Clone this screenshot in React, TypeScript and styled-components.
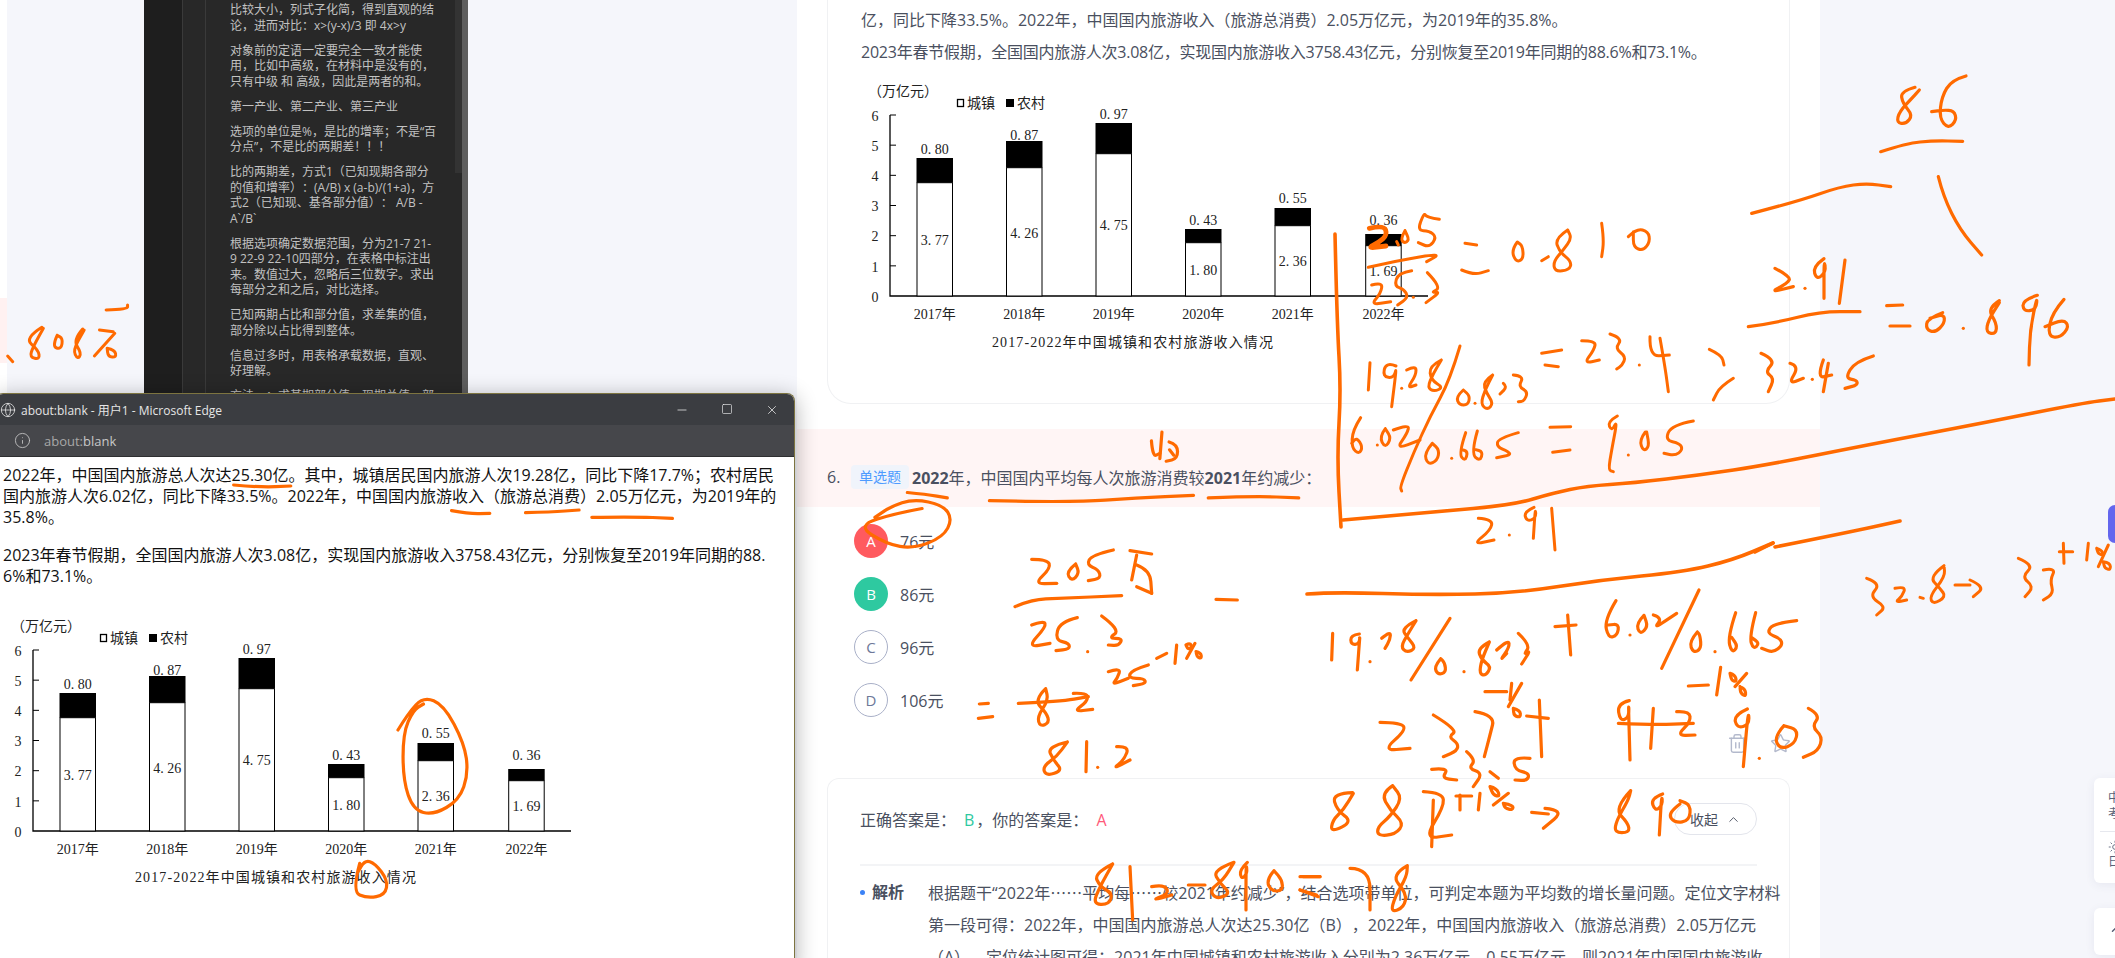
import React from "react";
import styled, { createGlobalStyle } from "styled-components";
import { ChevronUp, Globe, Info, Minus, Square, Star, Sun, Trash2, X } from "lucide-react";

const GlobalStyle = createGlobalStyle`
  html, body { margin: 0; padding: 0; background: #f5f6fb; }
  body {
    width: 2115px;
    height: 958px;
    overflow: hidden;
    font-family: "Open Sans", "Noto Sans CJK SC", sans-serif;
    text-spacing-trim: space-all;
  }
  * { box-sizing: border-box; }
`;

const Page = styled.div`
  position: relative;
  display: flex;
  width: 2115px;
  height: 958px;
  overflow: hidden;
  background: #f5f6fb;
`;

const LeftColumn = styled.div`
  display: flex;
  flex: 0 0 797px;
  align-items: flex-start;
`;

const EdgeStrip = styled.div`
  flex: 0 0 7px;
  height: 393px;
  padding-top: 298px;
  margin-right: 137px;
  background: #fff;
`;

const EdgePink = styled.div`
  height: 65px;
  background: #fff1f1;
`;

const Notes = styled.aside`
  position: relative;
  display: flex;
  flex: 0 0 324px;
  height: 393px;
  overflow: hidden;
  background: #282828;
`;

const NotesRail = styled.div`
  flex: 0 0 39px;
  background: #1e1e1e;
  border-right: 1px solid #3a3a3a;
`;

const NotesGutter = styled.div`
  flex: 0 0 23px;
  border-right: 1px solid #3a3a3a;
`;

const NotesBody = styled.div`
  flex: 1;
  min-width: 0;
  padding: 2px 0 0 24px;
`;

const NoteLine = styled.p`
  margin: 0 0 9.5px;
  font-size: 12px;
  line-height: 15.5px;
  color: #c2c2c2;
  white-space: nowrap;
`;

const NotesTrack = styled.div`
  flex: 0 0 6px;
  background: #5e5e5e;
`;

const NotesThumb = styled.div`
  position: absolute;
  top: 0;
  right: 6px;
  width: 7px;
  height: 173px;
  background: #333;
`;

const Panel = styled.main`
  display: flex;
  flex-direction: column;
  flex: 0 0 1023px;
  min-width: 0;
  height: 958px;
  overflow: hidden;
  background: #fff;
  color: #4a5060;
`;

const ChartCard = styled.section`
  flex: none;
  margin: 0 30px;
  height: 404px;
  padding: 4px 33px 0;
  border: 1px solid #f0f1f3;
  border-top: 0;
  border-radius: 0 0 24px 24px;
`;

const PanelText = styled.p<{ $track: number }>`
  margin: 0;
  font-size: 16px;
  line-height: 32px;
  white-space: nowrap;
  letter-spacing: ${(p) => p.$track}px;
`;

const QuestionBand = styled.div`
  display: flex;
  flex: none;
  align-items: center;
  height: 78px;
  margin-top: 25px;
  padding: 36px 0 18px 30px;
  background: #fff5f5;
  font-size: 16px;
`;

const QuestionNo = styled.span`
  flex: 0 0 24px;
`;

const KindTag = styled.span`
  flex: 0 0 58px;
  height: 24px;
  margin-right: 3px;
  border-radius: 4px;
  background: #f0f4fb;
  color: #4d9bff;
  font-size: 14px;
  line-height: 24px;
  text-align: center;
`;

const Strong = styled.b`
  font-weight: 700;
`;

const Options = styled.ul`
  display: flex;
  flex: none;
  flex-direction: column;
  gap: 19px;
  margin: 17px 0 0;
  padding: 0 0 0 57px;
  list-style: none;
`;

const Option = styled.li`
  display: flex;
  align-items: center;
  gap: 12px;
  height: 34px;
  font-size: 16px;
`;

const Bubble = styled.span<{ $state: "wrong" | "right" | "idle" }>`
  display: flex;
  flex: 0 0 34px;
  align-items: center;
  justify-content: center;
  height: 34px;
  border-radius: 50%;
  font-size: 15px;
  background: ${(p) => (p.$state === "wrong" ? "#ff5a5f" : p.$state === "right" ? "#2ec9a0" : "#fff")};
  color: ${(p) => (p.$state === "idle" ? "#6d7899" : "#fff")};
  border: ${(p) => (p.$state === "idle" ? "1px solid #a9b0c8" : "0")};
`;

const Actions = styled.div`
  display: flex;
  flex: none;
  justify-content: flex-end;
  gap: 22px;
  height: 20px;
  margin-top: 16px;
  padding-right: 29px;
  color: #b3b9cc;
`;

const AnswerCard = styled.section`
  flex: 1 0 auto;
  margin: 25px 30px 0;
  padding: 0 32px;
  min-width: 0;
  border: 1px solid #f0f1f3;
  border-bottom: 0;
  border-radius: 12px 12px 0 0;
`;

const AnswerHead = styled.div`
  display: flex;
  align-items: center;
  justify-content: space-between;
  padding: 24px 0 29px;
  border-bottom: 2px solid #f3f4f6;
  font-size: 16px;
`;

const Mark = styled.span<{ $color: string }>`
  margin: 0 2px 0 8px;
  color: ${(p) => p.$color};
`;

const CollapseButton = styled.button`
  display: flex;
  align-items: center;
  justify-content: center;
  gap: 8px;
  width: 83px;
  height: 32px;
  padding: 0;
  border: 1px solid #e3e5ec;
  border-radius: 16px;
  background: #fff;
  color: #4a5060;
  font: inherit;
  font-size: 14px;
`;

const Analysis = styled.div`
  display: flex;
  padding-top: 10px;
  font-size: 16px;
  line-height: 32px;
`;

const AnalysisDot = styled.span`
  flex: 0 0 5px;
  height: 5px;
  margin: 14px 7px 0 0;
  border-radius: 50%;
  background: #3b82f6;
`;

const AnalysisLabel = styled.b`
  flex: 0 0 56px;
  font-weight: 700;
`;

const AnalysisText = styled.p`
  margin: 0;
  white-space: nowrap;
`;

const Dots = styled.span`
  font-family: "Noto Sans CJK SC", sans-serif;
`;

const Rail = styled.div`
  display: flex;
  flex-direction: column;
  flex: 1;
  padding-left: 274px;
  padding-top: 778px;
  gap: 25px;
  font-size: 12px;
  color: #5a6178;
`;

const RailCard = styled.div<{ $h: number }>`
  display: flex;
  flex-direction: column;
  flex: none;
  height: ${(p) => p.$h}px;
  padding: 12px 0 0 14px;
  border-radius: 6px 0 0 6px;
  background: #fff;
  box-shadow: 0 2px 10px rgba(60, 70, 110, 0.08);
  white-space: nowrap;
  overflow: hidden;
`;

const RailRule = styled.div`
  flex: none;
  height: 1px;
  margin: 9px 0 8px -8px;
  background: #e6e8ee;
`;

const RailLabel = styled.span`
  line-height: 16px;
`;

const SidePill = styled.div`
  position: absolute;
  top: 505px;
  right: 0;
  width: 7px;
  height: 38px;
  border-radius: 8px 0 0 8px;
  background: #6366ee;
`;

const EdgeWindow = styled.section`
  position: absolute;
  top: 393px;
  left: -5px;
  width: 800px;
  height: 580px;
  border: 1px solid #7d7440;
  border-bottom: 0;
  border-radius: 8px 8px 0 0;
  background: #fff;
  box-shadow: 0 4px 22px rgba(0, 0, 0, 0.32);
`;

const TitleBar = styled.header`
  display: flex;
  align-items: center;
  height: 31px;
  padding-left: 4px;
  border-radius: 7px 7px 0 0;
  background: #3b3d41;
  color: #e6e6e6;
  font-size: 12px;
`;

const TitleText = styled.span`
  flex: 1;
  margin-left: 5px;
`;

const WinButtons = styled.div`
  display: flex;
  gap: 32px;
  margin-right: 15px;
  color: #eee;
`;

const AddressBar = styled.div`
  display: flex;
  align-items: center;
  gap: 13px;
  height: 32px;
  padding-left: 18px;
  border-bottom: 1px solid #2e2f31;
  background: #46474b;
  color: #c8c8c8;
  font-size: 13px;
`;

const Dim = styled.span`
  color: #a8a8a8;
`;

const WinContent = styled.div`
  padding: 8px 0 0 7px;
  color: #111;
`;

const WinText = styled.p`
  margin: 0 0 17px;
  font-size: 16px;
  line-height: 21px;
  white-space: nowrap;
`;

const WinChart = styled.div`
  margin: -4px 0 0 -3px;
`;

const ChartSvg = styled.svg`
  display: block;
  overflow: visible;
  text {
    font-family: "Liberation Serif", "Noto Sans CJK SC", serif;
    font-size: 14px;
    fill: #222;
    dominant-baseline: central;
  }
  text.center { text-anchor: middle; }
  text.title { text-anchor: middle; letter-spacing: 1.1px; }
`;

const ChartInMain = styled.div`
  margin: -3px 0 0 -4px;
`;

const InkLayer = styled.svg`
  position: absolute;
  inset: 0;
  width: 2115px;
  height: 958px;
  pointer-events: none;
  path {
    fill: none;
    stroke: #ff6a00;
    stroke-linecap: round;
    stroke-linejoin: round;
    vector-effect: non-scaling-stroke;
  }
`;

const bars = [
  { x: 60, top: 93, mid: 117.7, lo: "3. 77", hi: "0. 80", loY: 175, hiY: 84, year: "2017年" },
  { x: 149.5, top: 76, mid: 102.7, lo: "4. 26", hi: "0. 87", loY: 168, hiY: 70, year: "2018年" },
  { x: 239, top: 58, mid: 88.7, lo: "4. 75", hi: "0. 97", loY: 160, hiY: 49, year: "2019年" },
  { x: 328.5, top: 164, mid: 177.7, lo: "1. 80", hi: "0. 43", loY: 205, hiY: 155, year: "2020年" },
  { x: 418, top: 143, mid: 160.7, lo: "2. 36", hi: "0. 55", loY: 196, hiY: 133, year: "2021年" },
  { x: 508.7, top: 169, mid: 180.7, lo: "1. 69", hi: "0. 36", loY: 206, hiY: 155, year: "2022年" },
];

function Chart() {
  const w = 35.5;
  return (
    <ChartSvg width={580} height={290} viewBox="0 0 580 290">
      <text x={11} y={26}>（万亿元）</text>
      <rect x={100.5} y={34.5} width={6} height={7} fill="#fff" stroke="#000" strokeWidth={1.3} />
      <text x={110} y={38}>城镇</text>
      <rect x={149} y={34} width={8} height={8} fill="#000" />
      <text x={160} y={38}>农村</text>
      {[6, 5, 4, 3, 2, 1, 0].map((n, i) => (
        <text key={n} className="center" x={18} y={51 + i * 30.2}>{n}</text>
      ))}
      <path d="M33 50V231H571" fill="none" stroke="#000" strokeWidth={1.3} />
      {[0, 1, 2, 3, 4, 5].map((i) => (
        <path key={i} d={`M33 ${50 + i * 30.17}h6`} stroke="#000" strokeWidth={1} />
      ))}
      {bars.map((b) => (
        <g key={b.year}>
          <rect x={b.x} y={b.mid} width={w} height={231 - b.mid} fill="#fff" stroke="#000" strokeWidth={1} />
          <rect x={b.x - 0.5} y={b.top} width={w + 1} height={b.mid - b.top} fill="#000" />
          <text className="center" x={b.x + w / 2} y={b.hiY}>{b.hi}</text>
          <text className="center" x={b.x + w / 2} y={b.loY}>{b.lo}</text>
          <text className="center" x={b.x + w / 2} y={249}>{b.year}</text>
        </g>
      ))}
      <text className="title" x={276} y={277}>2017-2022年中国城镇和农村旅游收入情况</text>
    </ChartSvg>
  );
}

const smooth = (s: string) => {
  const p = s.trim().split(/\s+/).map((q) => q.split(",").map(Number));
  if (p.length === 1) return `M${p[0][0]} ${p[0][1]}l0.01 0`;
  let d = `M${p[0][0]} ${p[0][1]}`;
  for (let i = 1; i < p.length - 1; i++) {
    const mx = (p[i][0] + p[i + 1][0]) / 2;
    const my = (p[i][1] + p[i + 1][1]) / 2;
    d += `Q${p[i][0]} ${p[i][1]} ${mx} ${my}`;
  }
  const l = p[p.length - 1];
  return d + `L${l[0]} ${l[1]}`;
};

type InkGroup = { ox: number; oy: number; sx: number; sy: number; w: number; strokes: string[] };

const ink: InkGroup[] = [
  { ox: 0, oy: 0, sx: 1, sy: 1, w: 3.6, strokes: [
    "1335,234 1337,323 1341,390 1337,457 1341,527",
    "1343,520 1433,512 1513,505 1553,493 1587,486 1633,483 1700,475 1767,465 1867,445 1983,423 2083,403 2115,399",
    "1307,594 1333,592 1433,595 1517,593 1600,580 1683,572 1733,560 1773,543",
    "1775,547 1850,532 1900,521",
    "1755,552 1773,543",
  ] },
  { ox: 1300, oy: 190, sx: 1/3, sy: 1/3, w: 4.8, strokes: [
    "208,115 252,105 262,135 235,158 202,175 258,168",
  ] },
  { ox: 1300, oy: 190, sx: 1/3, sy: 1/3, w: 3, strokes: [
    "290,155 295,165",
    "315,122 302,145 312,160 328,150 315,122",
    "418,88 380,82 372,68 352,122 388,122 410,142 388,172 355,158",
    "205,232 300,210 425,190 380,215",
    "215,285 248,276 242,310 212,345 272,335",
    "335,242 295,248 283,288 312,298 325,322 293,345",
    "340,322",
    "382,248 425,292 392,308 422,305 378,338",
    "495,160 530,165",
    "485,240 520,255 565,242",
    "652,156 634,180 648,216 670,208 668,168 652,156",
    "725,212 745,200",
    "803,120 765,145 778,185 815,215 808,240 765,245 760,215 790,180 815,145 803,120",
    "905,100 912,150 905,200",
    "985,140 1010,115 1045,125 1050,155 1030,182 1000,172 1000,125",
    "210,518 205,600",
    "288,528 258,516 248,560 282,564 290,528 275,650",
    "305,595",
    "320,540 348,526 348,555 322,594 348,585",
    "424,510 388,528 393,570 430,592 402,605 382,592 400,550 424,510",
    "480,468 450,570 390,680 340,790 300,890 305,903",
    "490,600 468,620 478,645 504,645 510,618 490,600",
    "525,640",
    "578,555 548,575 560,610 580,640 562,660 542,642 555,600 578,555",
    "610,580 622,590 600,612",
    "640,555 672,558 655,590 684,605 672,634 655,635",
    "725,490 785,480",
    "735,525 775,530",
    "845,452 888,452 882,480 852,520 898,510",
    "930,432 968,445 945,475 978,500 966,527 950,537",
    "1018,525",
    "1050,440 1048,500 1108,495",
    "1080,445 1095,530 1105,605",
    "1228,478 1265,495 1272,525",
    "1300,565 1260,590 1240,630",
    "182,683 158,720 155,775 178,792 188,770 170,742 155,760",
    "232,765",
    "256,716 238,740 255,774 274,745 256,716",
    "280,720 328,702 322,730 288,778 360,750",
    "397,760 372,790 384,824 412,812 418,780 397,760",
    "455,805",
    "497,728 476,790 495,814 504,785 484,778",
    "532,723 513,790 540,814 549,785 524,778",
    "655,728 595,745 590,770 625,785 632,795 590,803",
    "750,712 812,710",
    "758,787 810,780",
    "952,678 922,695 935,724 952,690 935,780 925,840 940,845",
    "985,795",
    "1036,726 1018,750 1030,784 1048,770 1040,726",
    "1180,693 1115,705 1095,750 1140,760 1148,780 1125,797 1092,790",
    "535,985 578,988 572,1020 518,1064 582,1050",
    "628,1035",
    "702,952 672,965 680,994 708,985 706,952 700,1045",
    "755,955 765,1080",
  ] },
  { ox: 1680, oy: 70, sx: 1/3, sy: 1/3, w: 3.2, strokes: [
    "705,52 662,64 668,100 698,135 678,162 650,158 658,125 700,80 718,60",
    "858,18 815,30 785,80 778,145 805,176 830,150 822,122 790,120 755,125",
    "602,245 680,220 760,212 848,214",
    "215,430 350,395 480,350 560,340 632,350",
    "775,320 790,380 840,480 905,555",
    "285,595 333,620 322,640 270,667 340,650",
    "375,655",
    "432,566 398,590 410,630 438,605 432,566 432,685",
    "495,570 478,700",
    "205,770 280,760 420,725 540,725",
    "620,707 668,705",
    "630,768 690,768",
    "788,728 742,745 738,778 765,788 794,760 792,732 750,745",
    "850,775",
    "958,692 922,715 950,760 948,792 918,788 925,750 958,698",
    "1072,676 1028,690 1030,724 1068,720 1072,676 1050,780 1047,885",
    "1152,688 1115,730 1103,798 1140,804 1168,770 1150,748 1095,770",
    "243,850 288,870 255,905 283,925 265,965",
    "330,880 358,888 325,942 370,925",
    "397,928",
    "430,870 410,925 455,915",
    "445,880 430,965",
    "580,858 525,875 495,925 530,930 533,945 495,955",
  ] },
  { ox: 960, oy: 530, sx: 1/3, sy: 1/3, w: 3.2, strokes: [
    "215,88 263,88 272,115 222,162 288,160",
    "290,160",
    "347,102 318,125 335,154 358,130 347,102",
    "460,60 395,75 380,105 415,118 423,145 385,152",
    "510,62 575,72",
    "530,75 515,150",
    "530,105 570,120 575,190",
    "530,170 575,190",
    "165,230 215,208 300,205 485,197",
    "768,208 832,210",
    "215,285 252,272 258,290 202,352 270,340",
    "352,263 300,275 285,330 328,340 328,357 288,362",
    "383,365",
    "425,258 482,300 445,325 488,325 476,347 445,345",
    "590,385 620,370",
    "650,345 645,400",
    "678,345 690,338 696,352 684,358 678,345",
    "705,340 680,385",
    "708,365 722,368 725,385 712,382 708,365",
    "445,425 483,413 472,445 456,464 505,445",
    "565,405 515,420 505,445 552,445 558,460 520,467",
    "58,522 85,520",
    "55,565 98,560",
    "257,476 222,510 260,550 268,578 240,590 232,560 265,510 257,476",
    "340,490 383,488 382,515 340,545 398,538",
    "175,520 300,515 385,500",
    "322,636 262,650 280,690 308,722 258,738 248,710 290,680 322,636",
    "380,635 378,725",
    "413,712",
    "470,650 508,648 492,690 458,717 510,690",
    "458,1002 402,1030 420,1070 458,1090 447,1124 398,1122 420,1070 458,1002",
    "510,1010 518,1170",
    "575,1070 612,1063 628,1090 573,1112 635,1095",
    "685,1065 735,1065",
    "822,997 758,1020 780,1060 812,1090 770,1108 748,1080 790,1050 822,997",
    "862,997 838,1020 845,1048 862,1030 858,997 858,1140",
    "942,1022 918,1050 935,1084 968,1082 966,1050 942,1022",
    "1030,1040 1080,1040",
    "1020,1080 1075,1100",
  ] },
  { ox: 1300, oy: 560, sx: 1/3, sy: 1/3, w: 3.2, strokes: [
    "98,220 95,300",
    "178,222 152,225 153,254 178,252 180,222 172,330",
    "210,305",
    "245,235 272,212 270,240 255,265",
    "348,182 303,205 325,235 348,265 320,278 302,260 325,220 348,182",
    "450,175 390,270 333,360",
    "422,296 402,320 414,344 438,337 434,308 422,296",
    "492,335",
    "568,246 532,265 545,300 574,320 556,348 538,340 545,300 568,246",
    "590,270 626,238 628,262 600,302 620,280",
    "655,220 692,255 670,285 692,270 665,312",
    "765,200 828,195",
    "803,165 812,285",
    "948,122 913,180 925,234 952,226 957,192 925,195",
    "990,225",
    "1032,166 1008,190 1020,224 1044,200 1032,166",
    "1060,165 1088,173 1060,207 1130,160",
    "1197,90 1140,210 1085,325",
    "1192,216 1167,245 1180,279 1204,266 1200,225 1192,216",
    "1245,275",
    "1307,158 1283,230 1295,279 1314,260 1295,232",
    "1367,158 1348,230 1360,268 1379,250 1354,232",
    "1490,182 1420,190 1400,220 1440,235 1448,255 1420,278 1385,265",
    "1165,378 1225,375",
    "1262,322 1250,405",
    "1290,340 1305,345 1310,365 1295,362 1290,340",
    "1340,340 1305,380",
    "1320,380 1335,385 1338,410 1322,400 1320,380",
    "240,487 303,488 318,510 248,572 330,565",
    "400,465 474,510 445,530 474,550 472,572 430,590",
    "525,455 585,465 570,525 553,590",
    "555,395 620,395",
    "635,370 630,420",
    "665,370 625,440",
    "640,445 660,450 662,472 642,468 640,445",
    "680,468 745,475",
    "718,420 725,590",
    "988,422 952,430 960,484 988,472 985,422 990,600",
    "1060,445 1052,565",
    "1130,455 1168,453 1172,485 1130,527 1185,525",
    "955,490 1060,495 1180,490",
    "1342,447 1302,465 1310,504 1348,495 1345,447 1330,620",
    "1378,595",
    "1452,497 1422,530 1440,568 1484,552 1494,510 1452,497",
    "1525,445 1562,465 1535,500 1568,530 1555,572 1510,592",
    "395,628 447,623 425,655 470,660",
    "500,575 528,600 505,625 548,640 520,680",
    "570,635 595,655",
    "690,595 640,590 645,630 688,640 682,662 645,660",
    "158,698 97,700 110,750 158,785 92,818 98,780 130,750 160,700",
    "278,677 243,700 270,750 312,790 287,823 233,828 233,800 270,770 307,715 278,677",
    "370,695 428,698 432,740 372,837 455,825",
    "400,720 395,860",
    "468,708 515,708",
    "480,705 480,750",
    "540,700 535,750",
    "570,680 590,685 600,710 580,705 570,680",
    "625,700 580,735",
    "610,730 640,735 638,750 615,745 610,730",
    "695,757 745,762",
    "735,745 795,750 730,805",
    "992,692 942,745 985,790 988,818 943,818 950,780 985,720 992,692",
    "1088,702 1052,715 1065,754 1088,735 1085,702 1078,825",
    "1140,732 1102,760 1125,789 1168,782 1172,735 1140,722",
    "150,925 210,925 210,1050",
    "322,917 272,945 320,1000 312,1042 272,1058 285,1010 320,950 322,917",
    "0,950 60,950",
    "0,990 50,1005",
  ] },
  { ox: 1750, oy: 380, sx: 1/3, sy: 1/3, w: 3, strokes: [
    "350,595 393,610 358,650 408,680 380,705",
    "435,625 468,618 456,650 435,667 470,660",
    "510,652 520,655",
    "582,557 537,590 570,625 588,650 550,673 538,650 585,590 582,557",
    "615,615 660,615",
    "660,600 705,620 670,650",
    "805,535 853,555 815,590 851,620 825,650",
    "880,570 918,563 900,600 911,640 880,660",
    "928,515 968,515",
    "940,490 942,550",
    "1015,490 1010,540",
    "1040,505 1055,510 1060,525 1045,522 1040,505",
    "1075,495 1045,560",
    "1060,545 1080,548 1082,570 1064,565 1060,545",
  ] },
  { ox: 800, oy: 400, sx: 1/2.376, sy: 1/2.81, w: 3.2, strokes: [
    "450,283 650,288 800,275 935,268",
    "970,275 1080,270 1185,275",
    "255,260 300,265 350,275",
    "290,305 230,318 135,352 205,405 270,418 340,385 362,335 340,295 270,278 215,300 178,330",
    "835,115 838,160 855,150",
    "860,90 855,165",
    "877,118 897,125 897,165 870,172",
    "878,140 888,155",
  ] },
  { ox: 0, oy: 480, sx: 1/1.96, sy: 1/3, w: 3.2, strokes: [
    "458,15 510,22 570,18",
    "885,92 920,102 960,100",
    "1030,98 1080,96 1135,90",
    "1160,112 1240,110 1318,115",
    "780,750 800,700 830,650 870,675 910,790 918,880 900,960 850,1005 810,990 790,900 790,760 810,690 830,672",
    "705,1150 690,1235 720,1255 755,1245 760,1200 735,1150 715,1140 700,1180",
  ] },
  { ox: 0, oy: 0, sx: 1/1.96, sy: 1/3, w: 3, strokes: [
    "208,930 250,928 250,915",
    "15,1068 25,1085",
    "82,982 48,1015 75,1050 78,1078 58,1072 65,1040 85,985",
    "112,1006 102,1040 120,1048 123,1015 112,1006",
    "162,987 143,1020 160,1060 152,1078 143,1050 165,990",
    "195,990 222,995",
    "225,1000 185,1068",
    "210,1045 225,1050 228,1072 212,1070 210,1045",
  ] },
];

const notes = [
  ["比较大小，列式子化简，得到直观的结", "论，进而对比：x>(y-x)/3 即 4x>y"],
  ["对象前的定语一定要完全一致才能使", "用，比如中高级，在材料中是没有的，", "只有中级 和 高级，因此是两者的和。"],
  ["第一产业、第二产业、第三产业"],
  ["选项的单位是%，是比的增率；不是“百", "分点”，不是比的两期差！！！"],
  ["比的两期差，方式1（已知现期各部分", "的值和增率）：(A/B) x (a-b)/(1+a)，方", "式2（已知现、基各部分值）： A/B -", "A`/B`"],
  ["根据选项确定数据范围，分为21-7 21-", "9 22-9 22-10四部分，在表格中标注出", "来。数值过大，忽略后三位数字。求出", "每部分之和之后，对比选择。"],
  ["已知两期占比和部分值，求差集的值，", "部分除以占比得到整体。"],
  ["信息过多时，用表格承载数据，直观、", "好理解。"],
  ["方法一：求基期部分值、现期总值、部"],
];

const lines = (arr: string[]) =>
  arr.map((t, i) => (
    <React.Fragment key={i}>
      {i > 0 && <br />}
      {t}
    </React.Fragment>
  ));

export default function App() {
  return (
    <Page>
      <GlobalStyle />
      <LeftColumn>
        <EdgeStrip>
          <EdgePink />
        </EdgeStrip>
        <Notes>
          <NotesRail />
          <NotesGutter />
          <NotesBody>
            {notes.map((n, i) => (
              <NoteLine key={i}>{lines(n)}</NoteLine>
            ))}
          </NotesBody>
          <NotesThumb />
          <NotesTrack />
        </Notes>
      </LeftColumn>

      <Panel>
        <ChartCard>
          <PanelText $track={0}>亿，同比下降33.5%。2022年，中国国内旅游收入（旅游总消费）2.05万亿元，为2019年的35.8%。</PanelText>
          <PanelText $track={-0.24}>2023年春节假期，全国国内旅游人次3.08亿，实现国内旅游收入3758.43亿元，分别恢复至2019年同期的88.6%和73.1%。</PanelText>
          <ChartInMain>
            <Chart />
          </ChartInMain>
        </ChartCard>

        <QuestionBand>
          <QuestionNo>6.</QuestionNo>
          <KindTag>单选题</KindTag>
          <span>
            <Strong>2022</Strong>年，中国国内平均每人次旅游消费较<Strong>2021</Strong>年约减少：
          </span>
        </QuestionBand>

        <Options>
          <Option><Bubble $state="wrong">A</Bubble>76元</Option>
          <Option><Bubble $state="right">B</Bubble>86元</Option>
          <Option><Bubble $state="idle">C</Bubble>96元</Option>
          <Option><Bubble $state="idle">D</Bubble>106元</Option>
        </Options>

        <Actions>
          <Trash2 size={21} strokeWidth={1.6} />
          <Star size={21} strokeWidth={1.6} />
        </Actions>

        <AnswerCard>
          <AnswerHead>
            <span>
              正确答案是：<Mark $color="#2ec9a0">B</Mark>，你的答案是：<Mark $color="#ff5a7a">A</Mark>
            </span>
            <CollapseButton>
              收起
              <ChevronUp size={15} strokeWidth={1.5} />
            </CollapseButton>
          </AnswerHead>
          <Analysis>
            <AnalysisDot />
            <AnalysisLabel>解析</AnalysisLabel>
            <AnalysisText>
              根据题干“2022年<Dots>……</Dots>平均每<Dots>……</Dots>较2021年约减少”，结合选项带单位，可判定本题为平均数的增长量问题。定位文字材料
              <br />
              第一段可得：2022年，中国国内旅游总人次达25.30亿（B），2022年，中国国内旅游收入（旅游总消费）2.05万亿元
              <br />
              （A）。定位统计图可得：2021年中国城镇和农村旅游收入分别为2.36万亿元、0.55万亿元，则2021年中国国内旅游收
            </AnalysisText>
          </Analysis>
        </AnswerCard>
      </Panel>

      <Rail>
        <RailCard $h={105}>
          <RailLabel>中</RailLabel>
          <RailLabel>考</RailLabel>
          <RailRule />
          <Sun size={14} strokeWidth={1.5} />
          <RailLabel>日</RailLabel>
        </RailCard>
        <RailCard $h={47}>
          <ChevronUp size={18} strokeWidth={2} />
        </RailCard>
      </Rail>

      <SidePill />

      <EdgeWindow>
        <TitleBar>
          <Globe size={16} strokeWidth={1.2} />
          <TitleText>about:blank - 用户1 - Microsoft Edge</TitleText>
          <WinButtons>
            <Minus size={14} strokeWidth={1.3} />
            <Square size={12} strokeWidth={1.3} />
            <X size={14} strokeWidth={1.3} />
          </WinButtons>
        </TitleBar>
        <AddressBar>
          <Info size={17} strokeWidth={1.2} />
          <span>
            <Dim>about:</Dim>blank
          </span>
        </AddressBar>
        <WinContent>
          <WinText>
            2022年，中国国内旅游总人次达25.30亿。其中，城镇居民国内旅游人次19.28亿，同比下降17.7%；农村居民
            <br />
            国内旅游人次6.02亿，同比下降33.5%。2022年，中国国内旅游收入（旅游总消费）2.05万亿元，为2019年的
            <br />
            35.8%。
          </WinText>
          <WinText>
            2023年春节假期，全国国内旅游人次3.08亿，实现国内旅游收入3758.43亿元，分别恢复至2019年同期的88.
            <br />
            6%和73.1%。
          </WinText>
          <WinChart>
            <Chart />
          </WinChart>
        </WinContent>
      </EdgeWindow>

      <InkLayer viewBox="0 0 2115 958">
        {ink.map((g, i) => (
          <g key={i} transform={`translate(${g.ox} ${g.oy}) scale(${g.sx} ${g.sy})`} strokeWidth={g.w}>
            {g.strokes.map((s, j) => (
              <path key={j} d={smooth(s)} />
            ))}
          </g>
        ))}
      </InkLayer>
    </Page>
  );
}
